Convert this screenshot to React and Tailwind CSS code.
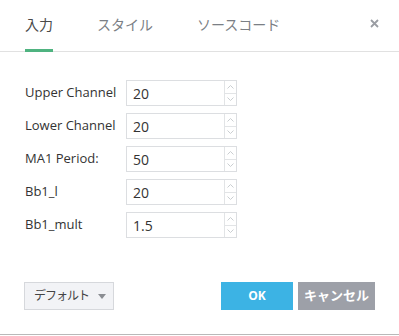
import React, { useState } from 'react';

const FONT = "'Open Sans', 'Noto Sans CJK JP', sans-serif";

const fields = [
  { label: 'Upper Channel', value: '20' },
  { label: 'Lower Channel', value: '20' },
  { label: 'MA1 Period:', value: '50' },
  { label: 'Bb1_l', value: '20' },
  { label: 'Bb1_mult', value: '1.5' },
];

function Chevron({ up }) {
  return (
    <svg width="7" height="4" viewBox="0 0 7 4" className="block">
      <path
        d={up ? 'M0.5 3.5 L3.5 0.5 L6.5 3.5' : 'M0.5 0.5 L3.5 3.5 L6.5 0.5'}
        fill="none"
        stroke="#c4c8cc"
        strokeWidth="0.9"
      />
    </svg>
  );
}

function NumberField({ value }) {
  return (
    <div className="flex h-[26px] w-[111px] border border-[#dcdee1] bg-white">
      <div className="flex flex-1 items-center pl-[6px] text-[14px] text-[#333]">{value}</div>
      <div className="flex w-[12px] flex-col border-l border-[#e2e4e6]">
        <div className="flex flex-1 items-center justify-center border-b border-[#e2e4e6]">
          <Chevron up />
        </div>
        <div className="flex flex-1 items-center justify-center">
          <Chevron />
        </div>
      </div>
    </div>
  );
}

export default function App() {
  const [tab, setTab] = useState(0);
  const tabs = ['入力', 'スタイル', 'ソースコード'];

  return (
    <div className="h-[336px] w-[399px] bg-white" style={{ fontFamily: FONT }}>
      {/* タブ */}
      <div className="relative flex h-[52px] items-start border-b border-[#e1e1e1] pl-[25px]">
        {tabs.map((t, i) => (
          <div
            key={t}
            onClick={() => setTab(i)}
            className={
              'relative mr-[44px] h-[51px] cursor-pointer pt-[14px] text-[14px] leading-[22px] ' +
              (tab === i ? 'text-[#4a4a4a]' : 'text-[#7b7f85]')
            }
          >
            {t}
            {tab === i && (
              <span className="absolute bottom-[-1px] left-0 right-0 h-[3px] bg-[#4fb380]" />
            )}
          </div>
        ))}
        <button className="absolute left-[370px] top-[19px]">
          <svg width="9" height="9" viewBox="0 0 9 9" className="block">
            <path d="M1 1 L8 8 M8 1 L1 8" stroke="#9a9da3" strokeWidth="1.8" />
          </svg>
        </button>
      </div>

      {/* フォーム */}
      <div className="flex flex-col gap-[7px] pl-[25px] pt-[28px]">
        {fields.map(f => (
          <div key={f.label} className="flex items-center">
            <div className="w-[101px] text-[13px] text-[#333]">{f.label}</div>
            <NumberField value={f.value} />
          </div>
        ))}
      </div>

      {/* フッター */}
      <div className="mt-[44px] flex items-center px-[24px]">
        <button className="flex h-[28px] w-[90px] shrink-0 items-center whitespace-nowrap border border-[#d6d8dc] bg-[#f2f3f6] pl-[9px] text-[12px] tracking-[-1px] text-[#444]">
          デフォルト
          <span className="ml-[9px] h-0 w-0 shrink-0 border-x-[4px] border-t-[5px] border-x-transparent border-t-[#8a8d92]" />
        </button>
        <div className="flex-1" />
        <button className="h-[28px] w-[72px] bg-[#3cb3e4] text-[12px] font-bold text-white">OK</button>
        <button className="ml-[5px] h-[28px] w-[77px] whitespace-nowrap bg-[#9da0a8] text-[13px] font-bold text-white">
          キャンセル
        </button>
      </div>
      <div className="mt-[24px] h-[1px] bg-[#b9b9b9]" />
    </div>
  );
}
